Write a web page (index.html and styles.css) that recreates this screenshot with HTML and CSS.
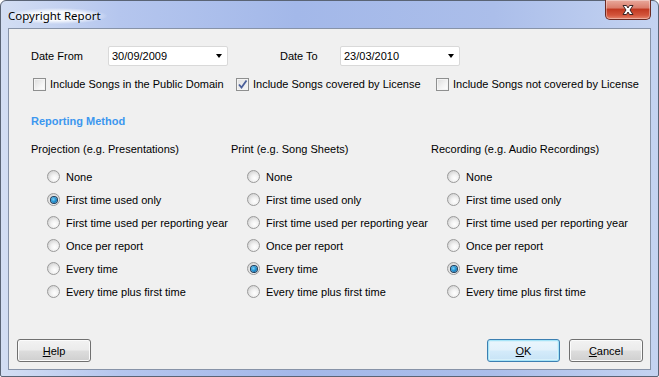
FILE: index.html
```html
<!DOCTYPE html>
<html>
<head>
<meta charset="utf-8">
<link rel="stylesheet" href="styles.css">
</head>
<body>
<div class="window">
  <div class="titlebar">
    <span class="title">Copyright Report</span>
    <div class="close">
      <svg width="20" height="12" viewBox="0 0 20 12">
        <path d="M5 1.5 L8.5 1.5 L10 4 L11.5 1.5 L15 1.5 L12 6 L15 10.5 L11.5 10.5 L10 8 L8.5 10.5 L5 10.5 L8 6 Z" fill="#fff" stroke="#3a2424" stroke-width="1" stroke-linejoin="round"/>
      </svg>
    </div>
  </div>
  <div class="client">
    <div class="date-row">
      <span class="lbl lbl-from">Date From</span>
      <div class="combo"><span>30/09/2009</span><i class="arrow"></i></div>
      <span class="lbl lbl-to">Date To</span>
      <div class="combo"><span>23/03/2010</span><i class="arrow"></i></div>
    </div>
    <div class="check-row">
      <label class="check c1"><span class="box"></span>Include Songs in the Public Domain</label>
      <label class="check c2"><span class="box checked"><svg width="11" height="11" viewBox="0 0 11 11"><path d="M2 5.5 L4.5 8.5 L9.5 1.5" fill="none" stroke="#4a5f9a" stroke-width="1.8"/></svg></span>Include Songs covered by License</label>
      <label class="check c3"><span class="box"></span>Include Songs not covered by License</label>
    </div>
    <div class="section">Reporting Method</div>
    <div class="columns">
      <div class="col">
        <div class="col-head">Projection (e.g. Presentations)</div>
        <div class="radios">
          <div class="radio"><span class="dot"></span>None</div>
          <div class="radio"><span class="dot on"></span>First time used only</div>
          <div class="radio"><span class="dot"></span>First time used per reporting year</div>
          <div class="radio"><span class="dot"></span>Once per report</div>
          <div class="radio"><span class="dot"></span>Every time</div>
          <div class="radio"><span class="dot"></span>Every time plus first time</div>
        </div>
      </div>
      <div class="col">
        <div class="col-head">Print (e.g. Song Sheets)</div>
        <div class="radios">
          <div class="radio"><span class="dot"></span>None</div>
          <div class="radio"><span class="dot"></span>First time used only</div>
          <div class="radio"><span class="dot"></span>First time used per reporting year</div>
          <div class="radio"><span class="dot"></span>Once per report</div>
          <div class="radio"><span class="dot on"></span>Every time</div>
          <div class="radio"><span class="dot"></span>Every time plus first time</div>
        </div>
      </div>
      <div class="col">
        <div class="col-head">Recording (e.g. Audio Recordings)</div>
        <div class="radios">
          <div class="radio"><span class="dot"></span>None</div>
          <div class="radio"><span class="dot"></span>First time used only</div>
          <div class="radio"><span class="dot"></span>First time used per reporting year</div>
          <div class="radio"><span class="dot"></span>Once per report</div>
          <div class="radio"><span class="dot on"></span>Every time</div>
          <div class="radio"><span class="dot"></span>Every time plus first time</div>
        </div>
      </div>
    </div>
    <div class="buttons">
      <button class="btn"><u>H</u>elp</button>
      <span class="spacer"></span>
      <button class="btn focus"><u>O</u>K</button>
      <button class="btn"><u>C</u>ancel</button>
    </div>
  </div>
</div>
</body>
</html>
```

FILE: styles.css
```css
* { box-sizing: border-box; }
html, body { margin: 0; padding: 0; background: #ffffff; }
body { width: 659px; height: 377px; overflow: hidden; }

.window {
  width: 659px;
  height: 377px;
  display: flex;
  flex-direction: column;
  border: 1px solid #5a6475;
  border-radius: 6px 6px 2px 2px;
  background: linear-gradient(to right, #d3def3 0%, #b5c6ee 18%, #a3b8e9 45%, #abbeea 75%, #c4d3f1 100%);
  font-family: "Liberation Sans", Arial, sans-serif;
  font-size: 11px;
  color: #000;
}

.titlebar {
  height: 27px;
  display: flex;
  align-items: flex-start;
  position: relative;
}
.title {
  margin: 7px 0 0 6px;
  font-family: "Noto Sans", "Open Sans", sans-serif;
  font-size: 11.5px;
  line-height: 16px;
  color: #000;
  padding: 0 6px 0 1px;
  background: radial-gradient(ellipse at center, rgba(255,255,255,0.85) 40%, rgba(255,255,255,0) 72%);
}
.close {
  position: absolute;
  right: 7px;
  top: -1px;
  width: 46px;
  height: 20px;
  border: 1px solid #6b2a22;
  border-top: none;
  border-radius: 0 0 5px 5px;
  background: linear-gradient(to bottom, #e9a99c 0%, #db7f6d 40%, #c23a22 50%, #d3553c 80%, #e6866e 100%);
  display: flex;
  align-items: center;
  justify-content: center;
  box-shadow: inset 0 0 0 1px rgba(255,255,255,0.35);
}

.client {
  flex: 1;
  margin: 0 7px 6px 7px;
  background: #f0f0f0;
  border: 1px solid #8793a8;
  padding: 17px 7px 7px 22px;
  display: flex;
  flex-direction: column;
}

.date-row {
  display: flex;
  align-items: center;
  height: 20px;
}
.lbl { line-height: 14px; }
.lbl-from { width: 77px; }
.lbl-to { width: 60px; margin-left: 52px; }
.combo {
  width: 120px;
  height: 20px;
  background: #fff;
  border: 1px solid #d9d9d9;
  border-radius: 2px;
  display: flex;
  align-items: center;
  padding-left: 3px;
  position: relative;
}
.combo span { flex: 1; line-height: 14px; }
.arrow {
  width: 0;
  height: 0;
  border-left: 3.5px solid transparent;
  border-right: 3.5px solid transparent;
  border-top: 4px solid #000;
  margin-right: 5px;
}

.check-row {
  display: flex;
  margin-top: 11px;
  height: 14px;
  align-items: center;
}
.check {
  display: flex;
  align-items: center;
  line-height: 14px;
}
.c1 { width: 203px; margin-left: 2px; }
.c2 { width: 200px; }
.box {
  width: 13px;
  height: 13px;
  border: 1px solid #8e8f8f;
  background: linear-gradient(135deg, #dcdcdc 0%, #f4f4f4 60%, #ffffff 100%);
  box-shadow: inset 0 0 0 1px #f4f4f4;
  margin-right: 4px;
  display: flex;
  align-items: center;
  justify-content: center;
}
.box.checked { background: linear-gradient(135deg, #e2e2e2 0%, #f6f6f6 100%); }

.section {
  margin-top: 23px;
  line-height: 14px;
  font-weight: bold;
  color: #3c97ef;
}

.columns {
  display: flex;
  margin-top: 14px;
}
.col { width: 200px; }
.col-head { line-height: 14px; }
.radios {
  margin-top: 9px;
  padding-left: 16px;
}
.radio {
  height: 23px;
  display: flex;
  align-items: center;
  line-height: 14px;
}
.dot {
  width: 13px;
  height: 13px;
  border-radius: 50%;
  border: 1px solid #9a9a9a;
  background: radial-gradient(circle at 60% 65%, #ffffff 0%, #f2f2f2 35%, #d6d6d6 75%, #cfcfcf 100%);
  margin-right: 6px;
  position: relative;
  flex-shrink: 0;
}
.dot.on::after {
  content: "";
  position: absolute;
  left: 2.5px;
  top: 2.5px;
  width: 6px;
  height: 6px;
  border-radius: 50%;
  background: radial-gradient(circle at 40% 40%, #7fd0f5 0%, #1d8fd0 50%, #0d4f86 100%);
  box-shadow: 0 0 0 1px #1f3c5a;
}

.buttons {
  margin-top: auto;
  margin-left: -14px;
  display: flex;
  gap: 9px;
  height: 23px;
}
.spacer { flex: 1; }
.btn {
  width: 74px;
  height: 23px;
  font-family: "Liberation Sans", Arial, sans-serif;
  font-size: 11px;
  color: #000;
  border: 1px solid #707070;
  border-radius: 3px;
  background: linear-gradient(to bottom, #f2f2f2 0%, #ebebeb 48%, #dddddd 52%, #cfcfcf 100%);
  box-shadow: inset 0 0 0 1px #fbfbfb;
  padding: 0;
}
.btn.focus {
  width: 73px;
  border-color: #3c7fb1;
  box-shadow: inset 0 0 0 1px #a6e4f8, inset 0 0 0 2px #d8f0fa;
  background: linear-gradient(to bottom, #eaf6fd 0%, #e2f1fb 48%, #d4ebfa 52%, #c7e3f6 100%);
}
```
